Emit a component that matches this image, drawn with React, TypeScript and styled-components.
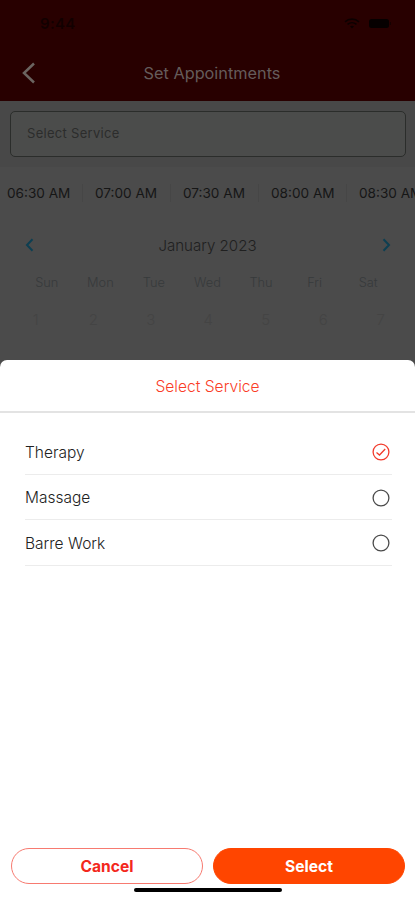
import { useState } from 'react';
import styled, { createGlobalStyle } from 'styled-components';

const GlobalStyle = createGlobalStyle`
	* {
		box-sizing: border-box;
	}

	body {
		margin: 0;
		font-family: Inter, 'Liberation Sans', sans-serif;
	}

	button {
		padding: 0;
		border: none;
		background: none;
		font: inherit;
		cursor: pointer;
	}
`;

const Screen = styled.div`
	position: relative;
	width: 100%;
	height: 900px;
	overflow: hidden;
	background-color: #4b4b4b;
`;

const Header = styled.header`
	height: 101px;
	background-color: #280000;
`;

const StatusBar = styled.div`
	display: flex;
	align-items: center;
	justify-content: space-between;
	height: 46px;
	padding: 0 24px 0 40px;
`;

const Clock = styled.span`
	color: #120000;
	font-size: 15px;
	font-weight: 600;
	letter-spacing: 0.3px;
`;

const StatusIcons = styled.div`
	display: flex;
	align-items: center;
	gap: 9px;
`;

const NavBar = styled.div`
	display: grid;
	grid-template-columns: 60px 1fr 51px;
	align-items: center;
	height: 54px;
`;

const BackButton = styled.button`
	display: flex;
	padding-left: 21px;
`;

const PageTitle = styled.h1`
	margin: 0;
	color: #655c5b;
	font-size: 16.3px;
	font-weight: 400;
	text-align: center;
	white-space: nowrap;
`;

const ServiceSection = styled.div`
	height: 66px;
	padding: 10px 9px 0 10px;
	background-color: #484848;
`;

const ServiceField = styled.button`
	display: flex;
	align-items: center;
	width: 100%;
	height: 46px;
	padding: 0 16px 2px;
	border: 1px solid #2b2d2b;
	border-radius: 5px;
	background-color: #4b4c4b;
	color: #2c2c2c;
	font-size: 13px;
	letter-spacing: 0.3px;
`;

const TimeList = styled.div`
	display: flex;
	height: 52px;
	align-items: center;
	margin-left: -5px;
	overflow: hidden;
`;

const TimeSlot = styled.div`
	flex: 0 0 88px;
	padding-left: 12px;
	border-right: 1px solid #464646;
	color: #161616;
	font-size: 13.6px;
	line-height: 18px;
	white-space: nowrap;
`;

const MonthBar = styled.div`
	display: flex;
	align-items: center;
	justify-content: space-between;
	height: 52px;
	padding: 0 22px;
`;

const MonthTitle = styled.span`
	color: #202020;
	font-size: 15.1px;
	font-weight: 300;
`;

const MonthButton = styled.button`
	display: flex;
`;

const WeekRow = styled.div`
	display: grid;
	grid-template-columns: repeat(7, 1fr);
	height: 22px;
	padding: 0 20px;
	align-items: center;
	color: #373a3b;
	font-size: 12.8px;
	font-weight: 300;
	text-align: center;
`;

const DateRow = styled.div`
	display: grid;
	grid-template-columns: repeat(7, 57.5px);
	margin: 16px 0 0 7px;
	line-height: 22px;
	color: #444;
	font-size: 15px;
	font-weight: 300;
	text-align: center;
`;

const Sheet = styled.section`
	position: absolute;
	inset: 360px 0 0;
	display: flex;
	flex-direction: column;
	border-radius: 7px 7px 0 0;
	background-color: #fff;
`;

const SheetTitle = styled.h2`
	height: 53px;
	margin: 0;
	border-bottom: 2px solid #e3e3e3;
	color: #fa3c26;
	font-size: 15.6px;
	font-weight: 300;
	line-height: 53px;
	text-align: center;
`;

const ServiceList = styled.div`
	flex: 1;
	padding: 16px 23px 0 25px;
`;

const ServiceRow = styled.button`
	display: flex;
	align-items: center;
	justify-content: space-between;
	width: 100%;
	height: 45.6px;
	padding: 2px 2px 0 0;
	border-bottom: 1px solid #ececec;
	color: #222;
	font-size: 15.5px;
	font-weight: 300;
`;

const Actions = styled.div`
	display: flex;
	gap: 10px;
	padding: 0 10px 16px 11px;
`;

const ActionButton = styled.button<{ $primary?: boolean }>`
	flex: 1;
	height: 36px;
	border: 1px solid ${({ $primary }) => ($primary ? '#ff4500' : '#f77a70')};
	border-radius: 18px;
	background-color: ${({ $primary }) => ($primary ? '#ff4500' : '#fff')};
	color: ${({ $primary }) => ($primary ? '#fff' : '#f3281c')};
	font-size: 15.6px;
	font-weight: 700;
`;

const HomeIndicator = styled.div`
	position: absolute;
	bottom: 8px;
	left: 134px;
	width: 148px;
	height: 4px;
	border-radius: 2px;
	background-color: #000;
`;

const times = ['06:30 AM', '07:00 AM', '07:30 AM', '08:00 AM', '08:30 AM'];
const weekdays = ['Sun', 'Mon', 'Tue', 'Wed', 'Thu', 'Fri', 'Sat'];
const services = ['Therapy', 'Massage', 'Barre Work'];

const Radio = ({ checked }: { checked: boolean }) => (
	<svg width="18" height="18" viewBox="0 0 18 18" fill="none">
		<circle cx="9" cy="9" r="7.9" stroke={checked ? '#f23a2b' : '#4a4a4a'} strokeWidth="1.3" />
		{checked && <path d="M4.5 9.4 7.5 12l5.7-6" stroke="#f23a2b" strokeWidth="1.3" />}
	</svg>
);

const App = () => {
	const [selected, setSelected] = useState('Therapy');

	return (
		<Screen>
			<GlobalStyle />
			<Header>
				<StatusBar>
					<Clock>9:44</Clock>
					<StatusIcons>
						<svg width="16" height="11" viewBox="0 0 16 11" fill="none" stroke="#0c0000" strokeWidth="1.6">
							<path d="M1 3.8C5 .2 11 .2 15 3.8M3.5 6.4c2.6-2.3 6.4-2.3 9 0" />
							<path d="m6 8.5 2 2 2-2C9 7.6 7 7.6 6 8.5Z" fill="#0c0000" stroke="none" />
						</svg>
						<svg width="22" height="9" viewBox="0 0 22 9">
							<rect width="20" height="9" rx="2.5" fill="#060000" />
							<rect x="20.8" y="3" width="1.2" height="3" fill="#150000" />
						</svg>
					</StatusIcons>
				</StatusBar>
				<NavBar>
					<BackButton>
						<svg width="16" height="22" viewBox="0 0 16 22" fill="none">
							<path d="M13 1.5 3 11l10 9.5" stroke="#6b6460" strokeWidth="2.5" />
						</svg>
					</BackButton>
					<PageTitle>Set Appointments</PageTitle>
				</NavBar>
			</Header>

			<ServiceSection>
				<ServiceField>Select Service</ServiceField>
			</ServiceSection>

			<TimeList>
				{times.map(time => (
					<TimeSlot key={time}>{time}</TimeSlot>
				))}
			</TimeList>

			<MonthBar>
				<MonthButton>
					<svg width="14" height="14" viewBox="0 0 14 14" fill="none">
						<path d="M10.5 1.2 5 7l5.5 5.8" stroke="#0d3f52" strokeWidth="2" />
					</svg>
				</MonthButton>
				<MonthTitle>January 2023</MonthTitle>
				<MonthButton>
					<svg width="14" height="14" viewBox="0 0 14 14" fill="none">
						<path d="M4.5 1.2 10 7l-5.5 5.8" stroke="#0d3f52" strokeWidth="2" />
					</svg>
				</MonthButton>
			</MonthBar>

			<WeekRow>
				{weekdays.map(day => (
					<span key={day}>{day}</span>
				))}
			</WeekRow>
			<DateRow>
				{weekdays.map((day, i) => (
					<span key={day}>{i + 1}</span>
				))}
			</DateRow>

			<Sheet>
				<SheetTitle>Select Service</SheetTitle>
				<ServiceList>
					{services.map(service => (
						<ServiceRow key={service} onClick={() => setSelected(service)}>
							{service}
							<Radio checked={selected === service} />
						</ServiceRow>
					))}
				</ServiceList>
				<Actions>
					<ActionButton>Cancel</ActionButton>
					<ActionButton $primary>Select</ActionButton>
				</Actions>
				<HomeIndicator />
			</Sheet>
		</Screen>
	);
};

export default App;
